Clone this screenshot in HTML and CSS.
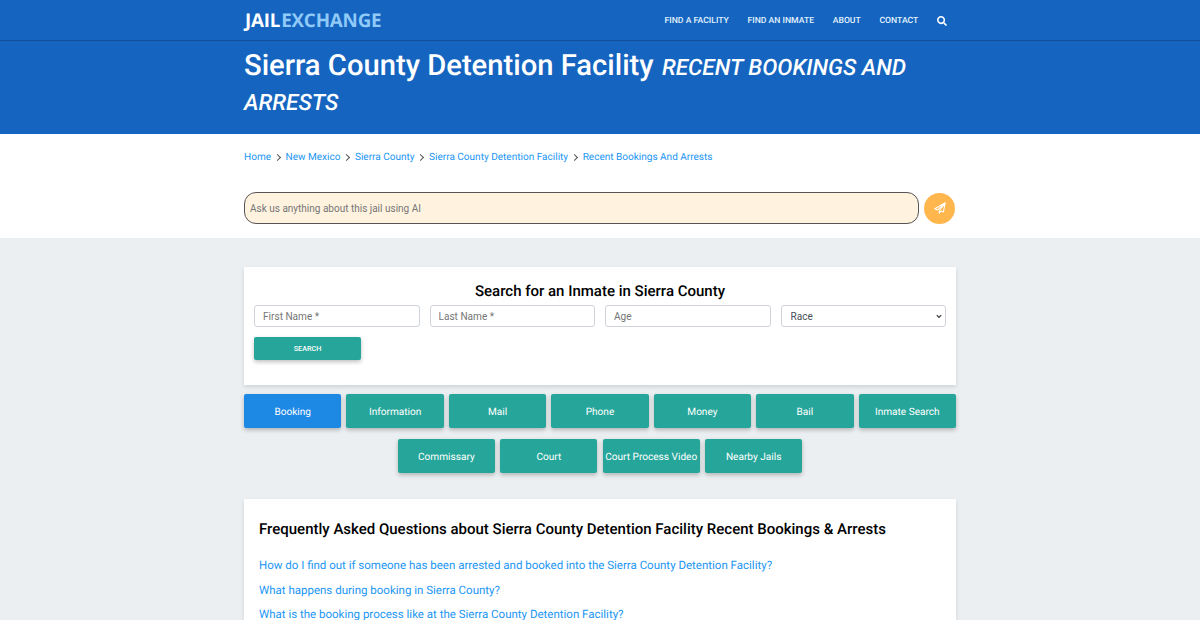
FILE: index.html
```html
<!DOCTYPE html>
<html lang="en">
<head>
<meta charset="utf-8">
<title>Sierra County Detention Facility Recent Bookings and Arrests</title>
<link rel="stylesheet" href="styles.css">
</head>
<body>
<header class="topbar">
  <div class="container topbar-inner">
    <a class="logo" href="#"><span class="logo-a">JAIL</span><span class="logo-b">EXCHANGE</span></a>
    <nav class="nav">
      <a href="#">FIND A FACILITY</a>
      <a href="#">FIND AN INMATE</a>
      <a href="#">ABOUT</a>
      <a href="#">CONTACT</a>
      <a href="#" class="nav-icon" aria-label="Search"><svg width="10" height="10" viewBox="0 0 512 512"><path fill="#fff" d="M505 442.700L405.300 343c-4.500-4.500-10.600-7-17-7H372c27.600-35.300 44-79.700 44-128C416 93.100 322.900 0 208 0S0 93.100 0 208s93.100 208 208 208c48.300 0 92.700-16.400 128-44v16.300c0 6.400 2.500 12.500 7 17l99.700 99.700c9.400 9.400 24.600 9.400 33.900 0l28.300-28.300c9.400-9.400 9.400-24.600.1-34zM208 336c-70.700 0-128-57.200-128-128 0-70.700 57.200-128 128-128 70.700 0 128 57.200 128 128 0 70.700-57.200 128-128 128z"/></svg></a>
    </nav>
  </div>
</header>
<section class="hero">
  <div class="container">
    <h1 class="hero-title">Sierra County Detention Facility <small class="hero-sub">RECENT BOOKINGS AND ARRESTS</small></h1>
  </div>
</section>
<section class="white-band">
  <div class="container">
    <nav class="crumbs">
      <a href="#">Home</a><span class="chev"></span>
      <a href="#">New Mexico</a><span class="chev"></span>
      <a href="#">Sierra County</a><span class="chev"></span>
      <a href="#">Sierra County Detention Facility</a><span class="chev"></span>
      <a href="#">Recent Bookings And Arrests</a>
    </nav>
    <form class="ask">
      <input class="ask-input" type="text" placeholder="Ask us anything about this jail using AI">
      <button class="ask-send" type="button" aria-label="Send"><svg width="12" height="12" viewBox="0 0 512 512"><path fill="none" stroke="#fff" stroke-width="44" stroke-linejoin="round" d="M480 32 32 290l120 50 296-256-226 290v100l74-88 104 44z"/></svg></button>
    </form>
  </div>
</section>
<main class="container main">
  <section class="card search-card">
    <h2 class="search-title">Search for an Inmate in Sierra County</h2>
    <div class="fields">
      <input class="field" type="text" placeholder="First Name *">
      <input class="field" type="text" placeholder="Last Name *">
      <input class="field" type="text" placeholder="Age">
      <select class="field select"><option>Race</option></select>
    </div>
    <button class="search-btn" type="button">SEARCH</button>
  </section>
  <div class="tabs">
    <a class="tab active" href="#">Booking</a>
    <a class="tab" href="#">Information</a>
    <a class="tab" href="#">Mail</a>
    <a class="tab" href="#">Phone</a>
    <a class="tab" href="#">Money</a>
    <a class="tab" href="#">Bail</a>
    <a class="tab" href="#">Inmate Search</a>
    <a class="tab" href="#">Commissary</a>
    <a class="tab" href="#">Court</a>
    <a class="tab" href="#">Court Process Video</a>
    <a class="tab" href="#">Nearby Jails</a>
  </div>
  <section class="card faq">
    <h2 class="faq-title">Frequently Asked Questions about Sierra County Detention Facility Recent Bookings &amp; Arrests</h2>
    <a class="faq-link" href="#">How do I find out if someone has been arrested and booked into the Sierra County Detention Facility?</a>
    <a class="faq-link" href="#">What happens during booking in Sierra County?</a>
    <a class="faq-link" href="#">What is the booking process like at the Sierra County Detention Facility?</a>
  </section>
</main>
</body>
</html>
```
FILE: styles.css
```css
* { box-sizing: border-box; }
html, body { margin: 0; height: 620px; overflow: hidden; }
body { background: #eceff1; font-family: Roboto, sans-serif; color: #000; text-rendering: geometricPrecision; }
a { text-decoration: none; }
.container { width: 712px; margin: 0 auto; }

.topbar { background: #1565c0; height: 41px; border-bottom: 1px solid #0f4f9b; box-shadow: 0 1px 2px rgba(0,0,0,.1); }
.topbar-inner { display: flex; align-items: center; justify-content: space-between; height: 40px; }
.logo { font-family: "Open Sans", sans-serif; font-weight: 700; font-size: 18.800px; letter-spacing: -.2px; padding-left: 1px; }
.logo-a { color: #fff; padding-right: 1px; }
.logo-b { color: #90caf9; }
.nav { display: flex; align-items: center; gap: 18.700px; padding-right: 9px; }
.nav a { color: #e3f2fd; font-size: 8.640px; font-weight: 500; padding-top: 1px; }
.nav-icon { display: flex; }

.hero { background: #1565c0; height: 93px; color: #fff; }
.hero-title { margin: 0; padding-top: 8px; font-size: 29.200px; line-height: 34.700px; font-weight: 500; }
.hero-sub { font-size: 22.600px; line-height: 1; font-style: italic; font-weight: 500; padding-left: 1px; }

.white-band { background: #fff; height: 104px; }
.crumbs { display: flex; align-items: center; padding-top: 17px; font-size: 10.040px; line-height: 13px; }
.crumbs a { color: #2196f3; }
.chev { width: 5px; height: 5px; margin: 0 6px 0 3.500px; border-top: 1.300px solid #555; border-right: 1.300px solid #555; transform: rotate(45deg); }
.ask { display: flex; align-items: center; margin-top: 28px; }
.ask-input { width: 675px; height: 32px; padding: 0 5px; border: 1px solid #555; border-radius: 12px; background: #fff3e0; font: 10px Roboto, sans-serif; }
.ask-input::placeholder { color: #757575; }
.ask-send { width: 31px; height: 31px; margin-left: 5px; border: 0; border-radius: 50%; background: #ffb74d; display: flex; align-items: center; justify-content: center; padding: 0; }

.main { padding-top: 29px; }
.card { background: #fff; box-shadow: 0 2px 4px rgba(0,0,0,.12); }
.search-card { height: 118px; padding: 15px 10px 0; }
.search-title { margin: 0 0 4px; text-align: center; font-size: 15px; line-height: 19px; font-weight: 500; }
.fields { display: grid; grid-template-columns: repeat(4, 1fr); gap: 10px; }
.field { height: 22px; width: 100%; padding: 0 8px; border: 1px solid #ced4da; border-radius: 3px; background: #fff; font: 10.080px Roboto, sans-serif; color: #495057; }
.field::placeholder { color: #757575; }
.select { appearance: none; padding: 0 0 0 9px; background: #fff url("data:image/svg+xml,%3Csvg xmlns='http://www.w3.org/2000/svg' width='6' height='5' viewBox='0 0 6 5'%3E%3Cpath d='M.8 1.200 3 3.400l2.200-2.200' fill='none' stroke='%23333' stroke-width='1.200'/%3E%3C/svg%3E") no-repeat right 3px center; }
.search-btn { display: block; width: 107px; height: 23px; margin-top: 10px; border: 0; border-radius: 2px; background: #26a69a; color: #fff; font: 500 7.200px Roboto, sans-serif; box-shadow: 0 2px 4px rgba(0,0,0,.25); }

.tabs { display: flex; flex-wrap: wrap; justify-content: center; gap: 11px 5.040px; margin-top: 9px; }
.tab { width: 97.400px; height: 34px; padding-top: 2px; display: flex; align-items: center; justify-content: center; border-radius: 2px; background: #26a69a; color: #fff; font-size: 10.080px; box-shadow: 0 2px 4px rgba(0,0,0,.25); white-space: nowrap; }
.tab.active { background: #1e88e5; }

.faq { margin-top: 26px; padding: 20px 15px; height: 200px; }
.faq-title { margin: 0 0 19px; font-size: 15px; line-height: 20px; font-weight: 500; }
.faq-link { display: block; color: #2196f3; font-size: 11.500px; line-height: 14px; margin-bottom: 10.500px; }
```
